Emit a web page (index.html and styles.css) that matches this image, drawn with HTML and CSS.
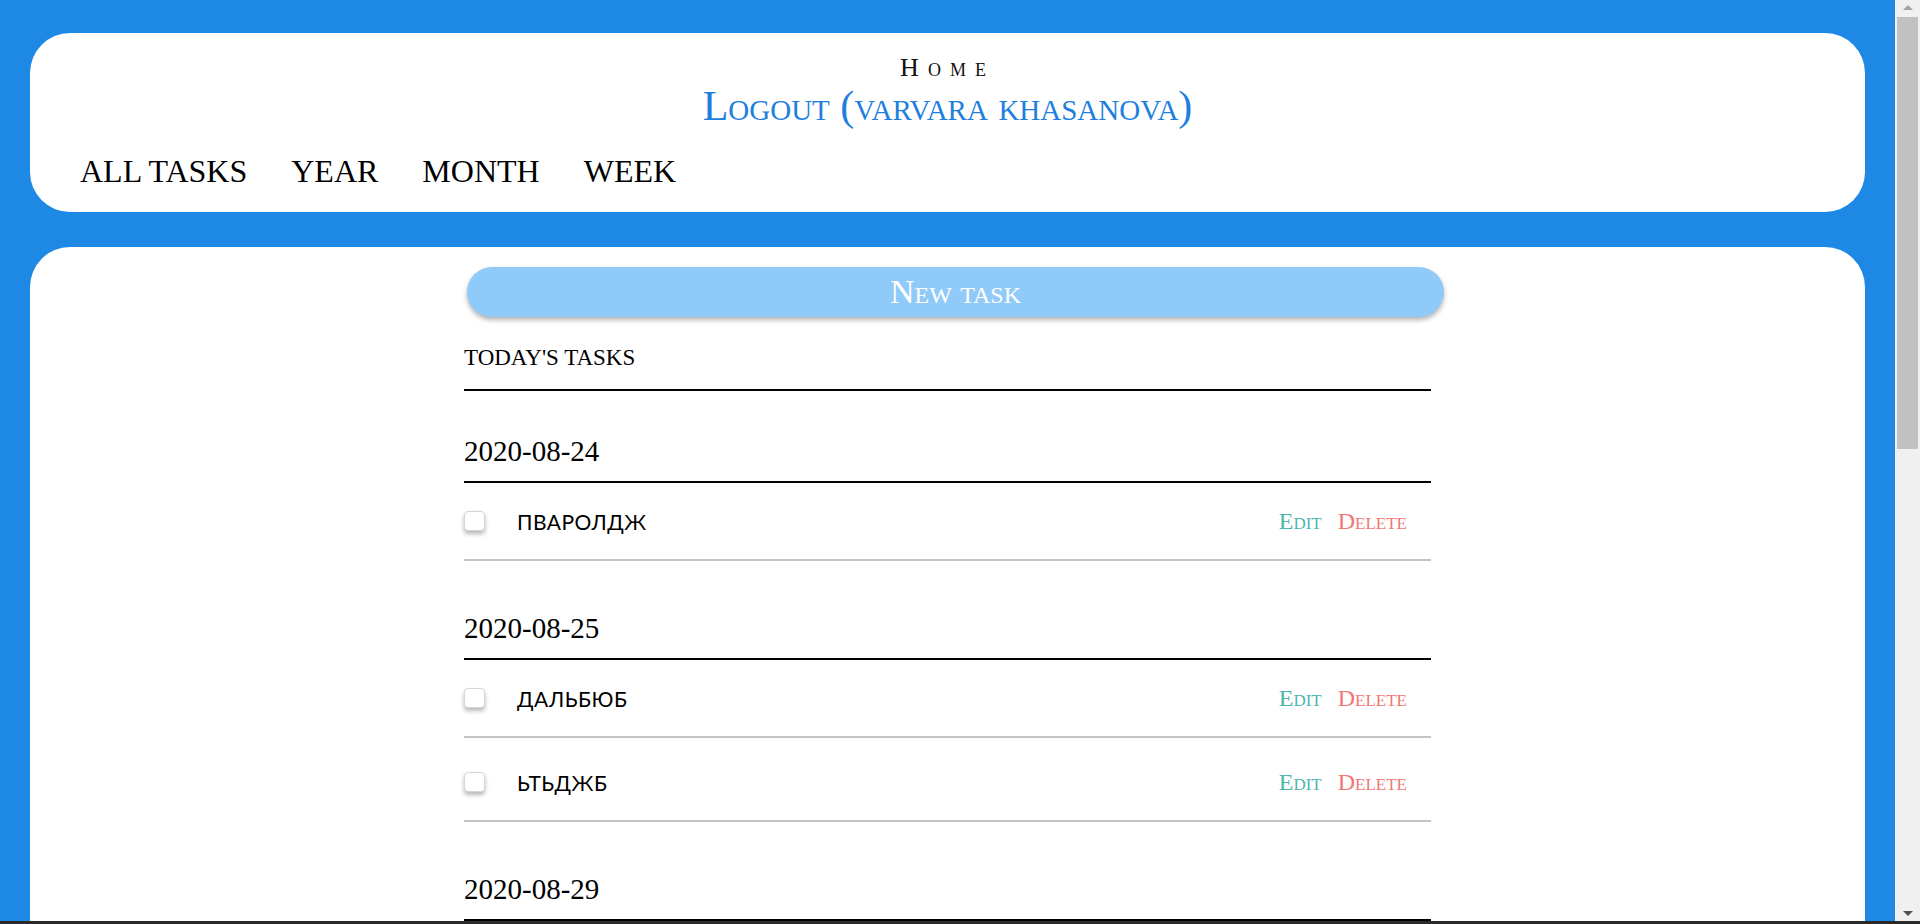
FILE: index.html
```html
<!DOCTYPE html>
<html lang="en">
<head>
<meta charset="utf-8">
<title>Tasks</title>
<link rel="stylesheet" href="styles.css">
</head>
<body>
  <div class="window">
    <div class="page">
      <header class="top-card">
        <div class="home">Home</div>
        <a class="logout" href="#">Logout (varvara khasanova)</a>
        <nav class="nav">
          <a class="nav-link" href="#">ALL TASKS</a>
          <a class="nav-link" href="#">YEAR</a>
          <a class="nav-link" href="#">MONTH</a>
          <a class="nav-link" href="#">WEEK</a>
        </nav>
      </header>

      <main class="content-card">
        <div class="column">
          <button class="new-task" type="button">New task</button>
          <h2 class="today">TODAY'S TASKS</h2>

          <section class="day">
            <h3 class="day-title">2020-08-24</h3>
            <ul class="tasks">
              <li class="task">
                <span class="check"></span>
                <span class="task-name">ПВАРОЛДЖ</span>
                <span class="actions"><a class="edit" href="#">Edit</a><a class="delete" href="#">Delete</a></span>
              </li>
            </ul>
          </section>

          <section class="day">
            <h3 class="day-title">2020-08-25</h3>
            <ul class="tasks">
              <li class="task">
                <span class="check"></span>
                <span class="task-name">ДАЛЬБЮБ</span>
                <span class="actions"><a class="edit" href="#">Edit</a><a class="delete" href="#">Delete</a></span>
              </li>
              <li class="task">
                <span class="check"></span>
                <span class="task-name">ЬТЬДЖБ</span>
                <span class="actions"><a class="edit" href="#">Edit</a><a class="delete" href="#">Delete</a></span>
              </li>
            </ul>
          </section>

          <section class="day">
            <h3 class="day-title">2020-08-29</h3>
          </section>
        </div>
      </main>
    </div>

    <div class="scrollbar" aria-hidden="true">
      <span class="sb-arrow sb-up"></span>
      <span class="sb-thumb"></span>
      <span class="sb-track"></span>
      <span class="sb-arrow sb-down"></span>
    </div>
  </div>
  <div class="taskbar-edge"></div>
</body>
</html>
```

FILE: styles.css
```css
html,
body {
  margin: 0;
  height: 100%;
}

body {
  display: flex;
  flex-direction: column;
  overflow: hidden;
  background: #1e88e5;
  font-family: "Liberation Serif", "Times New Roman", serif;
  color: #000;
}

a {
  text-decoration: none;
  color: inherit;
}

.window {
  flex: 1;
  display: flex;
  min-height: 0;
}

.page {
  flex: 1;
  min-width: 0;
  overflow: hidden;
  padding: 33px 30px 35px;
  background: #1e88e5;
}

/* ---------- scrollbar ---------- */
.scrollbar {
  width: 25px;
  flex: none;
  display: flex;
  flex-direction: column;
  background: #f0f0f0;
}

.sb-arrow {
  height: 17px;
  display: flex;
  justify-content: center;
  align-items: center;
}

.sb-arrow::before {
  content: "";
  width: 0;
  height: 0;
  border-left: 5px solid transparent;
  border-right: 5px solid transparent;
}

.sb-up::before {
  border-bottom: 5px solid #a3a3a3;
  margin-top: -2px;
}

.sb-down::before {
  border-top: 5px solid #505050;
  margin-top: 2px;
}

.sb-thumb {
  height: 432px;
  margin: 0 2px;
  background: #c1c1c1;
}

.sb-track {
  flex: 1;
}

.taskbar-edge {
  height: 3px;
  flex: none;
  background: #2a2a2a;
}

/* ---------- header card ---------- */
.top-card {
  background: #fff;
  border-radius: 40px;
  padding: 19px 50px 21px;
  display: flex;
  flex-direction: column;
}

.home {
  align-self: center;
  font-size: 26px;
  line-height: 32px;
  font-variant: small-caps;
  letter-spacing: 9px;
  color: #111;
}

.logout {
  align-self: center;
  font-size: 42px;
  line-height: 44px;
  font-variant: small-caps;
  color: #1e7fdd;
}

.nav {
  display: flex;
  gap: 44px;
  margin-top: 23px;
}

.nav-link {
  font-size: 32px;
  line-height: 40px;
  color: #000;
}

/* ---------- content card ---------- */
.content-card {
  display: block;
  margin-top: 35px;
  background: #fff;
  border-radius: 40px;
  min-height: 1630px;
  padding-top: 20px;
}

.column {
  width: 967px;
  margin: 0 auto;
}

.new-task {
  display: block;
  width: 977px;
  height: 50px;
  margin-left: 3px;
  border: 0;
  border-radius: 25px;
  background: #90caf9;
  box-shadow: 0 3px 5px rgba(0, 0, 0, 0.3);
  color: #fff;
  font-family: "Liberation Serif", "Times New Roman", serif;
  font-size: 34px;
  font-variant: small-caps;
  line-height: 50px;
  padding: 0;
}

.today {
  margin: 26px 0 0;
  padding-bottom: 16px;
  border-bottom: 2px solid #000;
  font-size: 23px;
  line-height: 30px;
  font-weight: normal;
}

.day {
  margin-top: 30px;
}

.day + .day {
  margin-top: 37px;
}

.day-title {
  margin: 0;
  padding: 15px 0;
  border-bottom: 2px solid #000;
  font-size: 29px;
  line-height: 30px;
  font-weight: normal;
}

.tasks {
  list-style: none;
  margin: 0;
  padding: 0;
}

.task {
  display: flex;
  align-items: center;
  height: 76px;
  border-bottom: 2px solid #c4c4c4;
}

.task + .task {
  margin-top: 6px;
}

.check {
  width: 19px;
  height: 18px;
  border: 1px solid #d6d6d6;
  border-radius: 4px;
  background: #fff;
  box-shadow: 0 3px 4px rgba(0, 0, 0, 0.28);
}

.task-name {
  margin-left: 32px;
  font-family: "Lato", "Open Sans", "Noto Sans", sans-serif;
  font-size: 21px;
  letter-spacing: 0.5px;
  color: #000;
  flex: 1;
}

.actions {
  display: flex;
  gap: 16px;
  padding-right: 24px;
  font-size: 24px;
  font-variant: small-caps;
}

.edit {
  color: #4db6ac;
}

.delete {
  color: #ef7777;
}
```
